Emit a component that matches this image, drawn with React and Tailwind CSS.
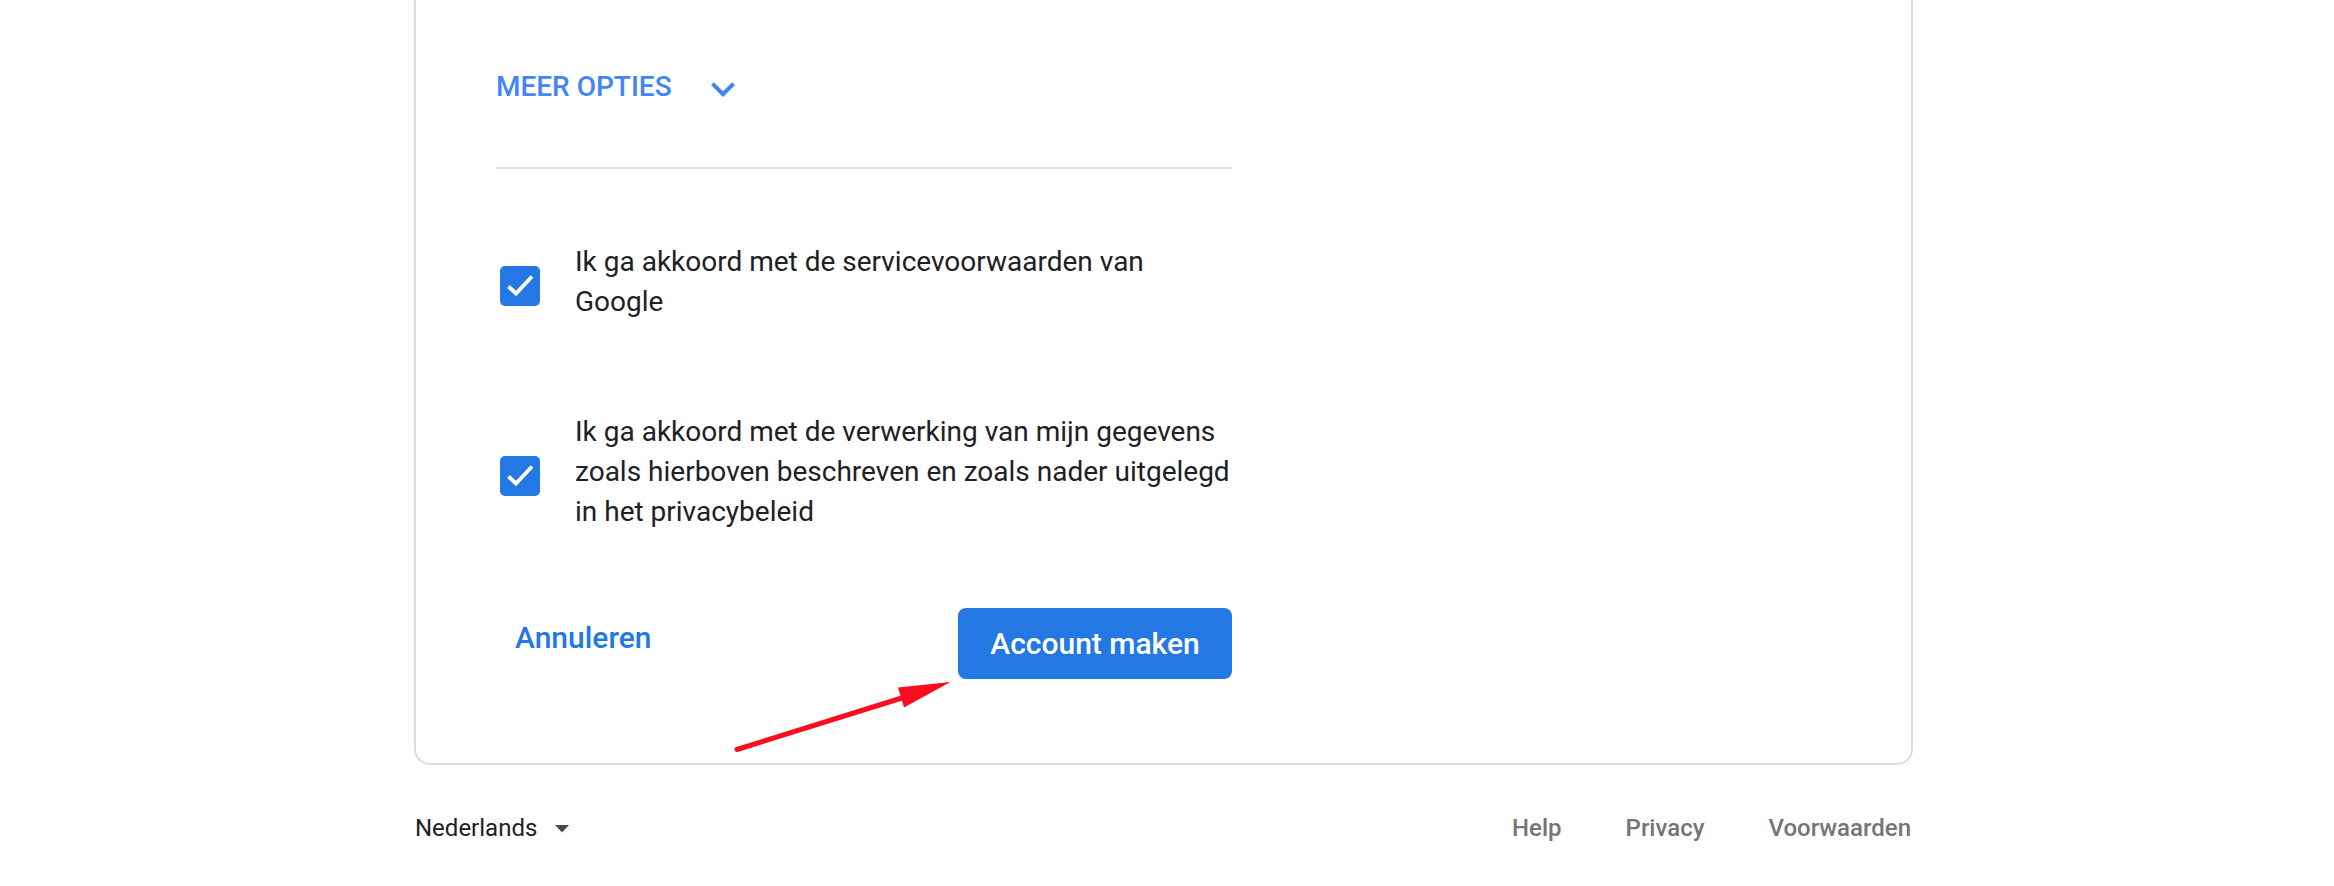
import React from "react";

function CheckBox() {
  return (
    <div className="w-[40px] h-[40px] rounded-[5px] bg-[#2478e4] flex items-center justify-center shrink-0 ml-[4px] mt-[8px]">
      <svg width="40" height="40" viewBox="0 0 40 40">
        <polyline points="8.5,20.5 16,27.5 32,10.5" fill="none" stroke="#ffffff" strokeWidth="3.8" />
      </svg>
    </div>
  );
}

export default function App() {
  return (
    <div className="relative w-[2334px] h-[886px] bg-white overflow-hidden" style={{ fontFamily: "Roboto, 'Noto Sans', 'Liberation Sans', sans-serif" }}>
      <div className="ml-[414px] w-[1499px]">
        {/* Card */}
        <div className="border-l-2 border-r-2 border-b-2 border-[#dadce0] rounded-b-[16px] pl-[80px] pt-[65px] pb-[84px]">
          <div className="w-[736px] flex flex-col">
            {/* Meer opties */}
            <div className="flex items-start h-[48px]">
              <span className="mt-[1.5px] text-[28px] leading-[40px] font-medium text-[#4285f4]">MEER OPTIES</span>
              <svg className="ml-[27px]" width="48" height="48" viewBox="0 0 24 24">
                <path d="M16.59 8.59L12 13.17 7.41 8.59 6 10l6 6 6-6z" fill="#4285f4" />
              </svg>
            </div>

            <div className="mt-[54px] h-[2px] bg-[#dadce0] w-[736px]" />

            {/* Checkbox 1 */}
            <div className="mt-[73px] flex items-center">
              <CheckBox />
              <div className="ml-[35px] text-[28px] leading-[40px] text-[#202124] whitespace-nowrap">
                Ik ga akkoord met de servicevoorwaarden van
                <br />
                Google
              </div>
            </div>

            {/* Checkbox 2 */}
            <div className="mt-[90px] flex items-center">
              <CheckBox />
              <div className="ml-[35px] text-[28px] leading-[40px] text-[#202124] whitespace-nowrap">
                Ik ga akkoord met de verwerking van mijn gegevens
                <br />
                zoals hierboven beschreven en zoals nader uitgelegd
                <br />
                in het privacybeleid
              </div>
            </div>

            {/* Buttons */}
            <div className="mt-[76px] flex justify-between items-start">
              <span className="ml-[19px] mt-[10px] text-[30px] leading-[40px] font-medium text-[#2478e4]">Annuleren</span>
              <div className="w-[274px] h-[71px] rounded-[8px] bg-[#2478e4] flex items-center justify-center">
                <span className="text-[30px] leading-[40px] font-medium text-white">Account maken</span>
              </div>
            </div>
          </div>
        </div>

        {/* Footer */}
        <div className="mt-[47px] h-[32px] flex justify-between items-center">
          <div className="flex items-center pl-[1px]">
            <span className="text-[24px] leading-[32px] text-[#202124]">Nederlands</span>
            <svg className="ml-[18px]" width="14" height="9" viewBox="0 0 14 9">
              <polygon points="0,1 14,1 7,8.5" fill="#4a4a4a" />
            </svg>
          </div>
          <div className="flex items-center gap-[64px] pr-[2px]">
            <span className="text-[24px] leading-[32px] font-medium text-[#757575]">Help</span>
            <span className="text-[24px] leading-[32px] font-medium text-[#757575]">Privacy</span>
            <span className="text-[24px] leading-[32px] font-medium text-[#757575]">Voorwaarden</span>
          </div>
        </div>
      </div>

      {/* Red annotation arrow */}
      <svg className="absolute left-0 top-0 pointer-events-none" width="2334" height="886" viewBox="0 0 2334 886">
        <line x1="737" y1="749.5" x2="905" y2="697" stroke="#f90d1f" strokeWidth="5" strokeLinecap="round" />
        <polygon points="898,687.5 950.5,682 904,707.5" fill="#f90d1f" />
      </svg>
    </div>
  );
}
